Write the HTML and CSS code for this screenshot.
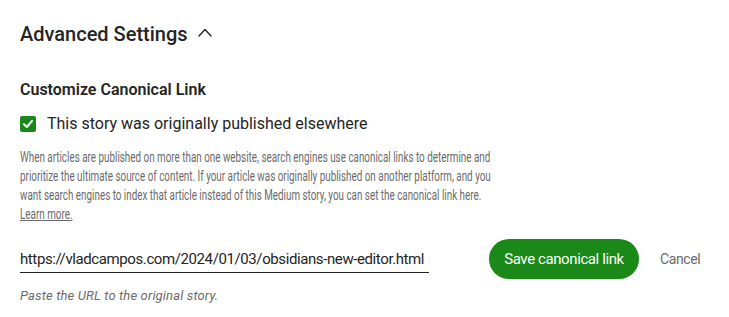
FILE: index.html
```html
<!DOCTYPE html>
<html lang="en">
<head>
<meta charset="utf-8">
<title>Advanced Settings</title>
<link rel="stylesheet" href="styles.css">
</head>
<body>
<section class="panel">
  <h2 class="panel-title">
    <span>Advanced Settings</span>
    <svg class="chevron" width="14" height="9" viewBox="0 0 14 9" aria-hidden="true">
      <polyline points="1,8 7,1.5 13,8" fill="none" stroke="#242424" stroke-width="1.4" stroke-linecap="round" stroke-linejoin="round"/>
    </svg>
  </h2>

  <h3 class="section-title">Customize Canonical Link</h3>

  <label class="check-row">
    <span class="checkbox">
      <svg width="16" height="16" viewBox="0 0 16 16" aria-hidden="true">
        <polyline points="4,8.3 6.8,11 12,5" fill="none" stroke="#fff" stroke-width="2" stroke-linecap="round" stroke-linejoin="round"/>
      </svg>
    </span>
    <span class="check-label">This story was originally published elsewhere</span>
  </label>

  <p class="description">When articles are published on more than one website, search engines use canonical links to determine and<br>prioritize the ultimate source of content. If your article was originally published on another platform, and you<br>want search engines to index that article instead of this Medium story, you can set the canonical link here.<br><a class="learn" href="#">Learn more.</a></p>

  <div class="link-row">
    <input class="url-input" type="text" value="https://vladcampos.com/2024/01/03/obsidians-new-editor.html">
    <button class="save-btn" type="button">Save canonical link</button>
    <button class="cancel-btn" type="button">Cancel</button>
  </div>

  <p class="hint">Paste the URL to the original story.</p>
</section>
</body>
</html>
```

FILE: styles.css
```css
* { box-sizing: border-box; }

body {
  margin: 0;
  background: #ffffff;
  color: #242424;
  font-family: Roboto, "Liberation Sans", sans-serif;
}

.panel {
  padding: 20px 20px 0 20px;
}

.panel-title {
  margin: 0;
  display: flex;
  align-items: center;
  gap: 10px;
  font-size: 20px;
  line-height: 28px;
  font-weight: 500;
  letter-spacing: 0;
}

.chevron {
  display: block;
  margin-top: -3px;
}

.section-title {
  margin: 32px 0 0 0;
  font-size: 16px;
  line-height: 20px;
  font-weight: 600;
}

.check-row {
  margin-top: 14px;
  display: flex;
  align-items: center;
  gap: 11px;
  height: 20px;
}

.checkbox {
  width: 16px;
  height: 16px;
  background: #1a8917;
  border-radius: 2px;
  display: block;
}

.checkbox svg { display: block; }

.check-label {
  font-size: 16px;
  line-height: 20px;
}

.description {
  margin: 14px 0 0 0;
  font-size: 14.5px;
  line-height: 19px;
  white-space: nowrap;
  color: #6b6b6b;
  transform: scaleX(0.68);
  transform-origin: left top;
}

.learn {
  color: #6b6b6b;
  text-decoration: underline;
}

.link-row {
  margin-top: 15px;
  display: flex;
  align-items: center;
  height: 40px;
}

.url-input {
  width: 409px;
  height: 27px;
  padding: 0;
  border: none;
  border-bottom: 1px solid #242424;
  font-family: Roboto, "Liberation Sans", sans-serif;
  font-size: 15px;
  line-height: 20px;
  letter-spacing: -0.4px;
  color: #242424;
  outline: none;
  background: transparent;
}

.save-btn {
  margin-left: 60px;
  height: 40px;
  width: 150px;
  border: none;
  border-radius: 20px;
  background: #1a8917;
  color: #ffffff;
  font-family: Roboto, "Liberation Sans", sans-serif;
  font-size: 15px;
  letter-spacing: -0.4px;
  padding: 0;
}

.cancel-btn {
  margin-left: 21px;
  border: none;
  background: none;
  padding: 0;
  font-family: Roboto, "Liberation Sans", sans-serif;
  font-size: 14px;
  letter-spacing: -0.4px;
  color: #6b6b6b;
}

.hint {
  margin: 8px 0 0 0;
  font-size: 13px;
  line-height: 18px;
  letter-spacing: 0.15px;
  font-style: italic;
  color: #6b6b6b;
}
```
